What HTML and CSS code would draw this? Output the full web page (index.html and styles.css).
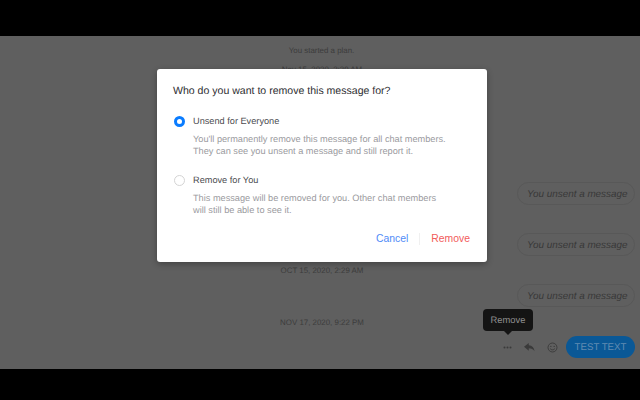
FILE: index.html
```html
<!DOCTYPE html>
<html lang="en">
<head>
<meta charset="utf-8">
<title>Remove message</title>
<link rel="stylesheet" href="styles.css">
</head>
<body>
<div class="bar bar-top"></div>
<main class="stage">
  <section class="chat">
    <p class="notice first">You started a plan.</p>
    <p class="notice second">Nov 15, 2020, 2:29 AM</p>
    <div class="bubble-row row-1"><span class="ghost">You unsent a message</span></div>
    <div class="bubble-row row-2"><span class="ghost">You unsent a message</span></div>
    <p class="notice stamp-1">OCT 15, 2020, 2:29 AM</p>
    <div class="bubble-row row-3"><span class="ghost">You unsent a message</span></div>
    <p class="notice stamp-2">NOV 17, 2020, 9:22 PM</p>
    <div class="composer">
      <svg class="ico dots" viewBox="0 0 12 4"><circle cx="2" cy="2" r="1.3"/><circle cx="6" cy="2" r="1.3"/><circle cx="10" cy="2" r="1.3"/></svg>
      <svg class="ico reply" viewBox="0 0 12 10"><path d="M5.2.5 0 4.8l5.2 4.2V6.3c2.8 0 4.7.9 6.3 3.2C11 6 9 3.6 5.2 3.2z"/></svg>
      <svg class="ico smile" viewBox="0 0 12 12"><circle cx="6" cy="6" r="4.9"/><circle class="eye" cx="4.2" cy="4.8" r=".7"/><circle class="eye" cx="7.8" cy="4.8" r=".7"/><path d="M3.4 7.2c1.2 1.8 4 1.8 5.2 0"/></svg>
      <span class="sent">TEST TEXT</span>
    </div>
  </section>
  <div class="tooltip">Remove</div>
  <div class="modal" role="dialog">
    <h2 class="modal-title">Who do you want to remove this message for?</h2>
    <div class="option">
      <span class="radio radio-on"></span>
      <div class="option-body">
        <div class="option-label">Unsend for Everyone</div>
        <p class="option-desc">You'll permanently remove this message for all chat members.<br>They can see you unsent a message and still report it.</p>
      </div>
    </div>
    <div class="option option-second">
      <span class="radio"></span>
      <div class="option-body">
        <div class="option-label">Remove for You</div>
        <p class="option-desc">This message will be removed for you. Other chat members<br>will still be able to see it.</p>
      </div>
    </div>
    <div class="actions">
      <button class="action cancel">Cancel</button>
      <span class="divider"></span>
      <button class="action remove">Remove</button>
    </div>
  </div>
</main>
<div class="bar bar-bottom"></div>
</body>
</html>
```
FILE: styles.css
```css
html, body { margin: 0; padding: 0; }
body {
  width: 640px;
  height: 400px;
  overflow: hidden;
  background: #000;
  font-family: "Liberation Sans", Arial, sans-serif;
  text-rendering: geometricPrecision;
  display: flex;
  flex-direction: column;
}
.bar { flex: none; background: #000; }
.bar-top { height: 36px; }
.bar-bottom { height: 31px; }
.stage { position: relative; flex: none; height: 333px; background: #5f5f5f; overflow: hidden; }
.chat { display: flex; flex-direction: column; height: 333px; box-sizing: border-box; padding-top: 9px; }
.notice { margin: 0; height: 10px; box-sizing: border-box; padding: 1px 0 0 4px; text-align: center; font-size: 7.9px; line-height: 10px; color: #3c3c3c; }
.first { padding-left: 3px; }
.second { margin-top: 9px; }
.ghost {
  display: block;
  width: 118px;
  height: 23px;
  line-height: 23px;
  box-sizing: border-box;
  padding: 0 0 0 9px;
  border: 1px solid #585858;
  border-radius: 12px;
  font-style: italic;
  font-size: 9.9px;
  white-space: nowrap;
  color: #383838;
}
.bubble-row { display: flex; justify-content: flex-end; padding-right: 5px; }
.row-1 { margin-top: 108px; }
.row-2 { margin-top: 28px; }
.stamp-1 { margin-top: 9px; }
.row-3 { margin-top: 9px; }
.stamp-2 { margin-top: 10px; }
.composer { display: flex; align-items: center; justify-content: flex-end; margin-top: 9px; padding-right: 5px; }
.ico { display: block; flex: none; }
.dots { width: 9px; height: 3px; fill: #3a3a3a; }
.reply { width: 11px; height: 10px; margin-left: 12px; fill: #3a3a3a; }
.smile { width: 11px; height: 11px; margin-left: 12px; fill: none; stroke: #3a3a3a; stroke-width: 1; }
.smile .eye { fill: #3a3a3a; stroke: none; }
.sent {
  margin-left: 8px;
  width: 69px;
  height: 22px;
  line-height: 24px;
  text-align: center;
  border-radius: 11px;
  background: #0a5896;
  color: #628cb2;
  font-size: 9.7px;
}
.tooltip {
  position: absolute;
  left: 483px;
  top: 273px;
  width: 50px;
  height: 22px;
  line-height: 21px;
  text-align: center;
  border-radius: 4px;
  background: #141414;
  color: #8f8f8f;
  font-size: 9.4px;
}
.tooltip::after {
  content: "";
  position: absolute;
  left: 21px;
  top: 22px;
  border: 4px solid transparent;
  border-top-color: #141414;
  border-bottom: 0;
}
.modal {
  position: absolute;
  left: 157px;
  top: 33px;
  width: 330px;
  height: 193px;
  box-sizing: border-box;
  padding: 15px 17px 0 16px;
  background: #fff;
  border-radius: 3px;
  box-shadow: 0 2px 6px rgba(0, 0, 0, .3);
}
.modal-title { margin: 0; font-weight: 400; font-size: 10.55px; line-height: 14px; color: #2d2d30; }
.option { display: flex; margin-top: 16px; }
.option-second { margin-top: 16px; }
.radio {
  flex: none;
  width: 11px;
  height: 11px;
  box-sizing: border-box;
  margin: 1.5px 8px 0 1px;
  border-radius: 50%;
  border: 1px solid #d4d4d4;
  background: #fff;
}
.radio-on { border: 3.5px solid #0a7cff; }
.option-label { font-size: 9.2px; line-height: 14px; color: #4b4b4f; }
.option-desc { margin: 5px 0 0; font-size: 9.2px; line-height: 12px; color: #9a9a9e; white-space: nowrap; }
.actions { display: flex; justify-content: flex-end; align-items: center; margin-top: 16px; }
.action { padding: 0; border: 0; background: none; font: inherit; font-size: 10.4px; line-height: 14px; }
.cancel { color: #4f8cf7; }
.remove { color: #f25b5b; }
.divider { width: 1px; height: 12px; margin: 0 11px; background: #f0f0f0; }
```
